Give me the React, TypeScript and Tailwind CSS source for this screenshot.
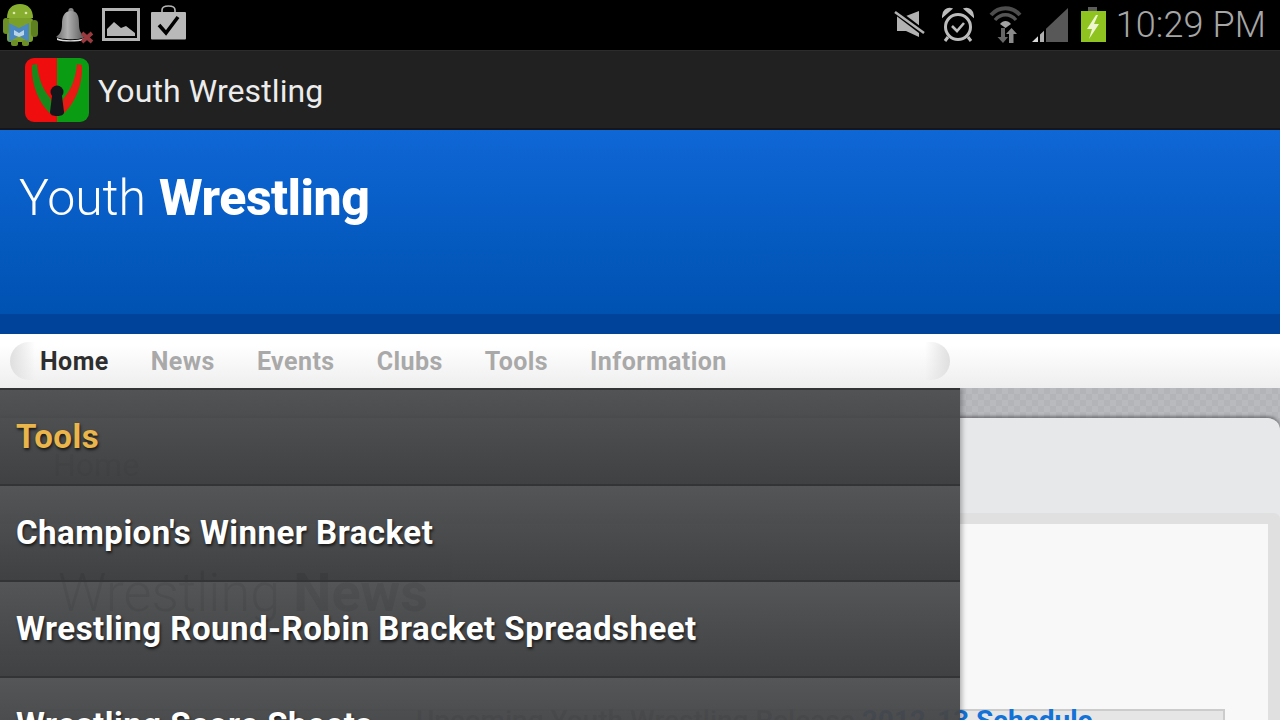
import React from "react";

const Android = () => (
  <svg width="48" height="50" viewBox="0 0 48 50" className="blur-[0.7px]">
    <path d="M7 18C7 9 12 4 20 4C28 4 33 9 33 18Z" fill="#88ae30" />
    <rect x="7" y="18" width="26" height="24" rx="3" fill="#7aa02a" />
    <rect x="3" y="18" width="6" height="16" rx="3" fill="#6c9025" />
    <rect x="31" y="20" width="7" height="17" rx="3.5" fill="#5f8020" />
    <rect x="11" y="40" width="7" height="6" rx="2" fill="#6c9025" />
    <rect x="22" y="40" width="7" height="6" rx="2" fill="#6c9025" />
    <circle cx="14" cy="13" r="1.3" fill="#dfe8b0" />
    <circle cx="26" cy="13" r="1.3" fill="#dfe8b0" />
    <path d="M9 23L19 28L29 23V42L19 36L9 42Z" fill="#4a86c0" />
    <path d="M14 30L19 33L24 30L24 35L19 37L14 35Z" fill="#b8d4e6" />
  </svg>
);

const Bell = () => (
  <svg width="48" height="50" viewBox="0 0 48 50" className="blur-[0.5px]">
    <defs>
      <linearGradient id="bellg" x1="0" x2="1" y1="0" y2="0">
        <stop offset="0" stopColor="#6c6c6c" />
        <stop offset="0.4" stopColor="#b0b0b0" />
        <stop offset="1" stopColor="#555" />
      </linearGradient>
    </defs>
    <circle cx="23" cy="10.5" r="2.6" fill="#888" />
    <path d="M23 11C16 11 14 17 14 24C14 31 12 34 8 37C14 40 32 40 37 37C33 34 31 31 31 24C31 17 30 11 23 11Z" fill="url(#bellg)" />
    <path d="M9 38C15 41 30 41 36 38L36 40C30 42 15 42 9 40Z" fill="#ddd" />
    <path d="M34 33L44 42M44 33L34 42" stroke="#9a3a3f" strokeWidth="3.8" />
  </svg>
);

const Picture = () => (
  <svg width="48" height="50" viewBox="0 0 48 50">
    <rect x="7.5" y="9.5" width="35" height="30" fill="#000" stroke="#b4b4b4" strokeWidth="3" />
    <path d="M11 36V29L18 22L25 28L30 26L39 33V36Z" fill="#b4b4b4" />
  </svg>
);

const Bag = () => (
  <svg width="48" height="50" viewBox="0 0 48 50">
    <path d="M18 13V10C18 7 20 6 24.5 6C29 6 31 7 31 10V13" fill="none" stroke="#b4b4b4" strokeWidth="1.6" />
    <rect x="7" y="12" width="35" height="27.5" rx="1" fill="#b9b9b9" />
    <path d="M15 25L22 33L34 17" fill="none" stroke="#000" strokeWidth="3.6" />
  </svg>
);

const Mute = () => (
  <svg width="48" height="50" viewBox="0 0 48 50">
    <path d="M10 16H19L32 11V37L19 31H10Z" fill="#b2b2b2" />
    <path d="M8 11L37 33" stroke="#000" strokeWidth="6" />
    <path d="M8 12L37 33" stroke="#b2b2b2" strokeWidth="2.6" />
  </svg>
);

const Alarm = () => (
  <svg width="48" height="50" viewBox="0 0 48 50">
    <circle cx="23" cy="27" r="12.5" fill="none" stroke="#bcbcbc" strokeWidth="3" />
    <path d="M8 16C8 11 12 8 16 9Z" fill="#bcbcbc" stroke="#bcbcbc" strokeWidth="2" />
    <path d="M38 16C38 11 34 8 30 9Z" fill="#bcbcbc" stroke="#bcbcbc" strokeWidth="2" />
    <path d="M13 37L10 41M33 37L36 41" stroke="#bcbcbc" strokeWidth="3" />
    <path d="M17 26L22 31L29 23" fill="none" stroke="#bcbcbc" strokeWidth="2.6" />
  </svg>
);

const Wifi = () => (
  <svg width="48" height="50" viewBox="0 0 48 50" className="blur-[0.3px]">
    <path d="M8 15C16 6 29 6 37 15" fill="none" stroke="#4d4d4d" strokeWidth="4" />
    <path d="M12 20C18 13 27 13 33 20" fill="none" stroke="#555" strokeWidth="3.4" />
    <path d="M17 24C20 20 25 20 28 24L22.5 28Z" fill="#a4a4a4" />
    <path d="M18 28V37H14.5L20 43L25 37H22V28Z" fill="#666" />
    <path d="M26 43V34H23L28.5 28L34 34H30.5V43Z" fill="#8a8a8a" />
  </svg>
);

const Signal = () => (
  <svg width="48" height="50" viewBox="0 0 48 50">
    <path d="M1 42L7 36.3V42Z" fill="#d8d8d8" />
    <path d="M9 34.4L13 30.7V42H9Z" fill="#b0b0b0" />
    <path d="M15 28.8L37 8V42H15Z" fill="#585858" />
  </svg>
);

const Battery = () => (
  <svg width="28" height="50" viewBox="0 0 28 50">
    <rect x="9" y="7" width="9" height="4" fill="#5c5c5c" />
    <rect x="2" y="11" width="25" height="31" fill="#8fc31f" />
    <path d="M17 15L8 29H13L10 39L20 24H15L19 15Z" fill="#eef6cf" />
  </svg>
);

const Logo = () => (
  <svg width="64" height="64" viewBox="0 0 64 64" className="rounded-[9px]">
    <rect width="32" height="64" fill="#f00d0d" />
    <rect x="32" width="32" height="64" fill="#0a9c12" />
    <path d="M7 7L12 6C13 20 18 32 26 41L27 57C15 47 6 28 7 7Z" fill="#178a1c" />
    <path d="M57 7L52 6C51 20 46 32 38 41L37 57C49 47 58 28 57 7Z" fill="#e81a14" />
    <circle cx="32" cy="34" r="6.5" fill="#15161c" />
    <path d="M27 38H37L39 54C39 57 36 58 32 58C28 58 25 57 25 54Z" fill="#15161c" />
  </svg>
);

const navItems = [
  { label: "Home", cls: "text-[#2e2e2e]" },
  { label: "News", cls: "text-[#a9a9a9]" },
  { label: "Events", cls: "text-[#a9a9a9]" },
  { label: "Clubs", cls: "text-[#a9a9a9]" },
  { label: "Tools", cls: "text-[#a9a9a9]" },
  { label: "Information", cls: "text-[#a9a9a9]" },
];

const menuItems = [
  { label: "Tools", cls: "text-[#eab54a]" },
  { label: "Champion's Winner Bracket", cls: "text-white" },
  { label: "Wrestling Round-Robin Bracket Spreadsheet", cls: "text-white" },
  { label: "Wrestling Score Sheets", cls: "text-white" },
];

export default function App() {
  return (
    <div className="flex flex-col w-[1280px] h-[720px] overflow-hidden bg-black font-['Roboto',sans-serif]">
      <div className="flex items-center justify-between h-[50px] shrink-0 bg-black pr-[14px]">
        <div className="flex">
          <Android />
          <Bell />
          <Picture />
          <Bag />
        </div>
        <div className="flex items-center">
          <Mute />
          <Alarm />
          <Wifi />
          <Signal />
          <Battery />
          <span className="ml-[9px] text-[36px] leading-[50px] font-light text-[#a6a6a6] tracking-[0.1px]">10:29 PM</span>
        </div>
      </div>

      <div className="flex items-center h-[80px] shrink-0 pl-[25px] bg-[#212121] border-t border-[#2c2c2c] border-b-2 border-b-[#15151a]">
        <Logo />
        <span className="ml-[9px] mt-[2px] text-[32px] leading-none text-[#ececec] tracking-[0.1px]">Youth Wrestling</span>
      </div>

      <div className="h-[184px] shrink-0 pl-[19px] pt-[36px] bg-gradient-to-b from-[#0f67d6] to-[#0052b1]">
        <h1 className="text-[50px] leading-[64px] text-white font-light tracking-[-0.1px]">
          Youth <span className="ml-[1px] font-extrabold tracking-[-0.5px]">Wrestling</span>
        </h1>
      </div>
      <div className="h-[20px] shrink-0 bg-[#00439b]" />

      <div className="flex items-center h-[54px] shrink-0 pl-[10px] bg-gradient-to-b from-white from-20% to-[#eeeeee]">
        <div className="flex items-center w-[940px]">
          <div className="w-[25px] h-[38px] rounded-l-full bg-gradient-to-r from-[#dfdfdf] to-transparent" />
          <div className="flex flex-1 ml-[5px] gap-[42px] text-[25px] font-bold leading-none tracking-[0.45px]">
            {navItems.map((n) => (
              <span key={n.label} className={n.cls}>{n.label}</span>
            ))}
          </div>
          <div className="w-[25px] h-[38px] rounded-r-full bg-gradient-to-l from-[#dfdfdf] to-transparent" />
        </div>
      </div>

      <div className="relative flex-1 flex flex-col overflow-hidden bg-[#b5b6ba] bg-[conic-gradient(#b9babe_25%,#b3b4b8_0_50%,#b9babe_0_75%,#b3b4b8_0)] bg-[length:12px_12px]">
        <div className="mt-[30px] flex-1 flex flex-col rounded-tr-[12px] bg-[#e7e8ea] shadow-[0_-2px_3px_rgba(0,0,0,0.35)]">
          <div className="h-[95px] shrink-0 pl-[53px] pt-[30px] text-[32px] leading-[34px] text-[#aaa]">Home</div>
          <div className="flex-1 rounded-t-[6px] bg-[#e0e0e0] pt-[11px] pr-[12px]">
            <div className="h-full bg-[#f8f8f8] pt-[21px]">
              <div className="flex items-center w-[452px] h-[110px] pl-[58px] pb-[14px] bg-[#ececec] text-[54px] font-light text-[#666] leading-none whitespace-nowrap">
                Wrestling&nbsp;<span className="font-bold">News</span>
              </div>
              <div className="ml-[40px] mr-[43px] mt-[54px] h-[60px] pl-[374px] border-2 border-[#cccccc] bg-[#e6e6e6] text-[28px] leading-[20px] font-medium text-[#777] whitespace-nowrap">
                Upcoming Youth Wrestling Release <span className="font-bold text-[#1272d8]">2012-13 Schedule</span>
              </div>
            </div>
          </div>
        </div>

        <div className="absolute left-0 top-0 w-[960px] h-[340px] flex flex-col shadow-[2px_0_5px_rgba(0,0,0,0.3)] border-t-2 border-[#333436]">
          {menuItems.map((m) => (
            <div
              key={m.label}
              className="flex items-center h-[96px] shrink-0 pl-[16px] pb-[2px] bg-gradient-to-b from-[#4e4f51f5] to-[#393a3cf5] border-b-2 border-[#333436]"
            >
              <span className={`text-[33px] font-bold leading-none tracking-[0.5px] [text-shadow:1px_2px_3px_rgba(0,0,0,0.7)] ${m.cls}`}>{m.label}</span>
            </div>
          ))}
        </div>
      </div>
    </div>
  );
}
